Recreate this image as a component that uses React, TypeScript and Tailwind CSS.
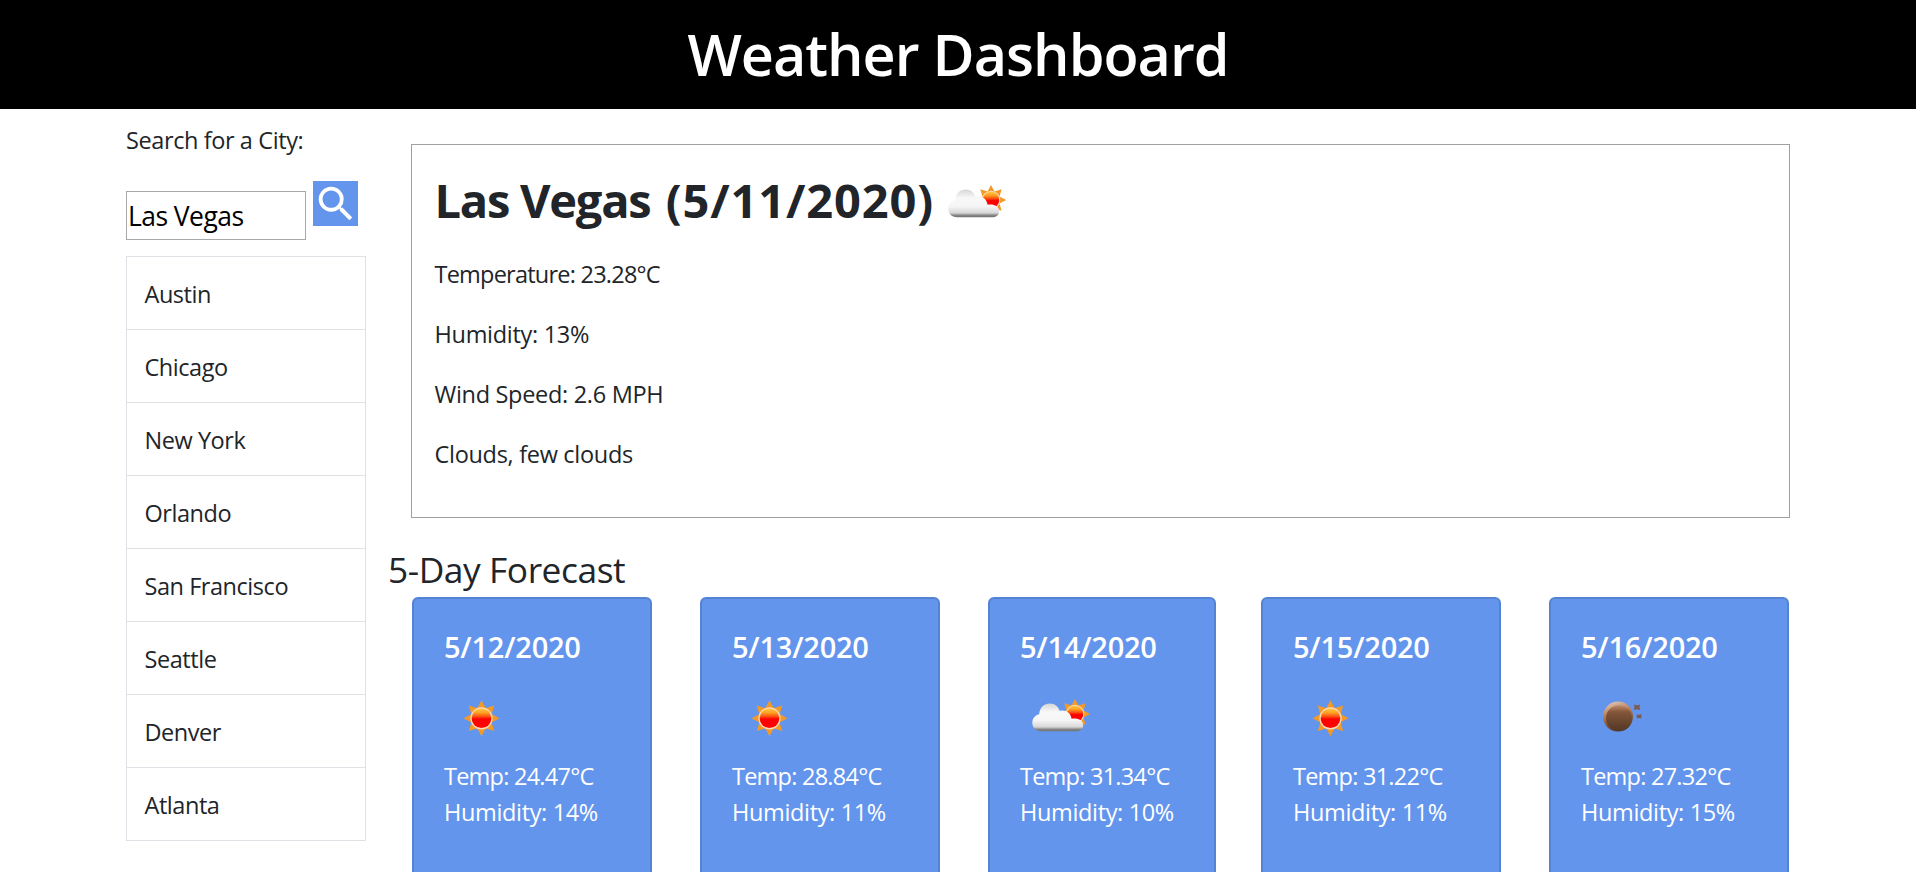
import { useState } from "react";
import { MdSearch } from "react-icons/md";

type Sky = "sun" | "cloud" | "moon";

const cities = ["Austin", "Chicago", "New York", "Orlando", "San Francisco", "Seattle", "Denver", "Atlanta"];

const details = ["Temperature: 23.28°C", "Humidity: 13%", "Wind Speed: 2.6 MPH", "Clouds, few clouds"];

const forecast: { date: string; sky: Sky; temp: string; humidity: string; width: string }[] = [
  { date: "5/12/2020", sky: "sun", temp: "24.47", humidity: "14", width: "w-[240px]" },
  { date: "5/13/2020", sky: "sun", temp: "28.84", humidity: "11", width: "w-[240px]" },
  { date: "5/14/2020", sky: "cloud", temp: "31.34", humidity: "10", width: "w-[228px]" },
  { date: "5/15/2020", sky: "sun", temp: "31.22", humidity: "11", width: "w-[240px]" },
  { date: "5/16/2020", sky: "moon", temp: "27.32", humidity: "15", width: "w-[240px]" },
];

const rays = [0, 45, 90, 135, 180, 225, 270, 315];

function Sun() {
  return (
    <g>
      {rays.map((r) => (
        <path key={r} d="M-4.8 -9 L0 -18 L4.8 -9 Z" fill="#f39a26" transform={`rotate(${r})`} />
      ))}
      <circle r="11.1" fill="#fbd9b5" />
      <circle r="9.8" fill="url(#sunFill)" />
    </g>
  );
}

function WeatherIcon({ sky }: { sky: Sky }) {
  return (
    <svg viewBox="0 0 75 75" className="block size-[75px] shrink-0">
      {sky === "sun" && (
        <g transform="translate(37.5 37.3)">
          <Sun />
        </g>
      )}
      {sky === "cloud" && (
        <g>
          <g transform="translate(55 33) scale(0.84)">
            <Sun />
          </g>
          <path
            d="M21 50.3 C15.5 50.3 12.3 46.5 12.3 41.8 C12.3 37 15.6 33.8 19.2 33.2 C19.6 26.6 24.2 22.6 29.8 22.6 C34.6 22.6 38.2 25.4 39.6 29.8 C45.5 28.2 50.6 31.2 51.6 37.8 C57.6 36.6 63.2 39.4 63.2 44 C63.2 47.8 60.6 50.3 56.6 50.3 Z"
            fill="url(#cloudFill)"
          />
        </g>
      )}
      {sky === "moon" && (
        <g>
          <circle cx="37" cy="35.6" r="15" fill="url(#moonRim)" />
          <circle cx="37.9" cy="37.2" r="12.9" fill="url(#moonFill)" />
          <path d="M53 23.5 L56 24.5 L59 23.5 L58.5 26.3 L59 29 L56 28.2 L53 29 L53.5 26.3 Z" fill="#7d5a4a" />
          <path d="M55.4 33.2 L58 34 L60.6 33 L60.2 35.5 L60.6 37.6 L58 37.1 L55.8 37.6 L56 35.5 Z" fill="#7d5a4a" />
        </g>
      )}
    </svg>
  );
}

function Gradients() {
  return (
    <svg className="absolute size-0" aria-hidden="true">
      <defs>
        <linearGradient id="sunFill" x1="0" y1="0" x2="0" y2="1">
          <stop offset="0" stopColor="#ffc845" />
          <stop offset="0.22" stopColor="#ffa024" />
          <stop offset="0.42" stopColor="#fb4a0e" />
          <stop offset="0.54" stopColor="#fd0000" />
          <stop offset="1" stopColor="#ff0500" />
        </linearGradient>
        <linearGradient id="cloudFill" x1="0" y1="0" x2="0" y2="1">
          <stop offset="0" stopColor="#d6d6d6" />
          <stop offset="0.3" stopColor="#f8f8f8" />
          <stop offset="0.6" stopColor="#f6f6f6" />
          <stop offset="0.84" stopColor="#d8d8d8" />
          <stop offset="0.93" stopColor="#858585" />
          <stop offset="1" stopColor="#707070" />
        </linearGradient>
        <linearGradient id="moonRim" x1="0.3" y1="0" x2="0.6" y2="1">
          <stop offset="0" stopColor="#dcc3b6" />
          <stop offset="0.35" stopColor="#bd8158" />
          <stop offset="0.7" stopColor="#7d5433" />
          <stop offset="1" stopColor="#4f3425" />
        </linearGradient>
        <linearGradient id="moonFill" x1="0" y1="0" x2="0" y2="1">
          <stop offset="0" stopColor="#c08d6c" />
          <stop offset="0.25" stopColor="#85573a" />
          <stop offset="0.6" stopColor="#6b482f" />
          <stop offset="1" stopColor="#533726" />
        </linearGradient>
      </defs>
    </svg>
  );
}

export default function App() {
  const [query, setQuery] = useState("Las Vegas");

  return (
    <div className="h-[872px] w-full overflow-hidden bg-white font-['Open_Sans','Noto_Sans',sans-serif] text-[23.5px] leading-[36px] font-[370] text-[#212529]">
      <Gradients />
      <header className="flex h-[109px] items-center justify-center bg-black">
        <h1 className="text-[57.5px] leading-none font-[630] tracking-[-0.98px] text-white">Weather Dashboard</h1>
      </header>

      <div className="flex pl-[126px]">
        <aside className="w-[240px] shrink-0 pt-[13px]">
          <p className="tracking-[-0.4px]">Search for a City:</p>
          <form className="mt-[23px] flex items-start gap-[7px]" onSubmit={(e) => e.preventDefault()}>
            <input
              className="mt-[10px] h-[49px] w-[180px] rounded-none border border-[#a9a9a9] bg-white px-px text-[26.5px] tracking-[-0.55px] text-black outline-none"
              value={query}
              onChange={(e) => setQuery(e.target.value)}
            />
            <button type="submit" aria-label="Search" className="flex size-[45px] items-center justify-center bg-[#6495ed] text-white">
              <MdSearch className="size-[46px] shrink-0" />
            </button>
          </form>
          <ul className="mt-4 border border-t-0 border-[#dee2e6]">
            {cities.map((city) => (
              <li key={city} className="border-t border-[#dee2e6] pt-[19px] pb-[17px] pl-[17.5px] tracking-[-0.45px]">
                {city}
              </li>
            ))}
          </ul>
        </aside>

        <main className="ml-[22px] w-[1402px] shrink-0">
          <section className="mt-[35px] ml-[23px] h-[374px] border border-[#a0a0a0] pt-[22px] pl-[22.5px]">
            <div className="flex items-start">
              <h2 className="mt-[4px] w-[501px] text-[47px] leading-[58px] font-bold whitespace-nowrap">
                <span className="tracking-[-1.25px]">Las Vegas </span>
                <span className="ml-[4.5px] tracking-[0.85px]">(5/11/2020)</span>
              </h2>
              <WeatherIcon sky="cloud" />
            </div>
            <div className="mt-[14px] flex flex-col gap-6">
              {details.map((d) => (
                <p key={d} className={d.startsWith("Temp") ? "tracking-[-0.77px]" : "tracking-[-0.3px]"}>
                  {d}
                </p>
              ))}
            </div>
          </section>

          <h3 className="mt-6 text-[35.3px] leading-[54px] tracking-[-0.43px]">5-Day Forecast</h3>
          <div className="mt-px ml-6 grid grid-cols-[288px_288px_273px_288px_240px] text-white">
            {forecast.map((f) => (
              <article key={f.date} className={`${f.width} h-[282px] rounded-[6px] border-2 border-[#5583d4] bg-[#6495ed] pt-[30px] pl-[30px]`}>
                <h4 className="text-[29px] font-[630] tracking-[-0.22px]">{f.date}</h4>
                <div className="mt-[16px] mb-[2px]">
                  <WeatherIcon sky={f.sky} />
                </div>
                <p className="tracking-[-0.76px]">Temp: {f.temp}°C</p>
                <p className="tracking-[-0.35px]">Humidity: {f.humidity}%</p>
              </article>
            ))}
          </div>
        </main>
      </div>
    </div>
  );
}
